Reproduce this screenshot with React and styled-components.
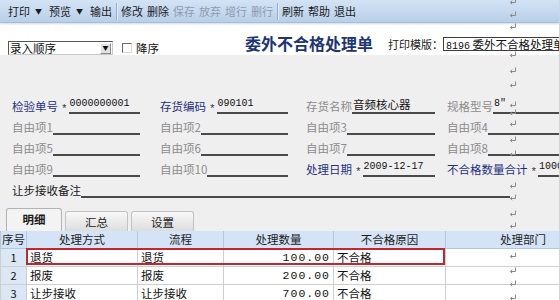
import React from 'react';
import styled, { createGlobalStyle } from 'styled-components';

const GlobalStyle = createGlobalStyle`
  html, body { margin: 0; padding: 0; background: #fff; }
  body {
    font-family: "Noto Sans CJK SC", "Liberation Sans", sans-serif;
    font-size: 12px;
    color: #111;
  }
`;

const Page = styled.div`
  width: 559px;
  height: 300px;
  overflow: hidden;
  position: relative;
  display: flex;
  flex-direction: column;
  background: #fff;
`;

/* ---------- toolbar ---------- */
const Toolbar = styled.div`
  flex: none;
  height: 22px;
  display: flex;
  align-items: center;
  gap: 4px;
  padding-left: 8px;
  background: linear-gradient(#d3e3f5, #b8cfe9);
  box-shadow: 0 1px 0 #a7bdd8, 0 2px 2px rgba(120, 140, 170, 0.35);
  position: relative;
  z-index: 1;
`;

const ToolButton = styled.span`
  flex: none;
  display: inline-flex;
  align-items: center;
  font-size: 11px;
  line-height: 14px;
  white-space: nowrap;
  color: ${(p) => (p.$disabled ? '#8e9bae' : '#1b1b1b')};
`;

const Caret = styled.span`
  font-size: 7px;
  margin: 0 3px 0 5px;
  color: #1b1b1b;
`;

const ToolSep = styled.span`
  flex: none;
  width: 1px;
  height: 17px;
  background: #94adca;
  box-shadow: 1px 0 0 #e4eef9;
`;

/* ---------- top white area ---------- */
const TopBar = styled.div`
  flex: none;
  height: 33px;
  display: flex;
  align-items: flex-start;
  padding-left: 8px;
  background: #fff;
  & > * { flex: none; }
`;

const Combo = styled.div`
  margin-top: 19px;
  width: 105px;
  height: 14px;
  box-sizing: border-box;
  display: flex;
  align-items: center;
  justify-content: space-between;
  border: 1px solid;
  border-color: #555 #c8c8c8 #c8c8c8 #555;
  background: #fff;
  font-size: 11.5px;
  line-height: 12px;
  padding-left: 1px;
`;

const ComboButton = styled.span`
  width: 11px;
  height: 11px;
  margin-right: 1px;
  box-sizing: border-box;
  display: flex;
  align-items: center;
  justify-content: center;
  background: #e2e2e2;
  border: 1px solid;
  border-color: #fff #8a8a8a #8a8a8a #fff;
  font-size: 6px;
  color: #111;
`;

const CheckBox = styled.span`
  margin: 21px 0 0 9px;
  width: 10px;
  height: 10px;
  box-sizing: border-box;
  border: 1px solid;
  border-color: #6a6a6a #dcdcdc #dcdcdc #6a6a6a;
  background: #fff;
`;

const CheckLabel = styled.span`
  margin: 19px 0 0 4px;
  font-size: 11.5px;
  line-height: 14px;
  white-space: nowrap;
`;

const Title = styled.h1`
  margin: 12px 0 0 86px;
  font-size: 16px;
  line-height: 18px;
  font-weight: bold;
  color: #1c3578;
  white-space: nowrap;
`;

const PrintGroup = styled.div`
  margin: 15px 0 0 15px;
  display: flex;
  align-items: center;
`;

const PrintLabel = styled.span`
  flex: none;
  font-size: 11px;
  line-height: 14px;
  white-space: nowrap;
  color: #222;
`;

const PrintInput = styled.div`
  flex: none;
  width: 140px;
  height: 14px;
  box-sizing: border-box;
  border: 1px solid #3c3c3c;
  background: #fff;
  font-size: 11.5px;
  line-height: 12px;
  white-space: nowrap;
  overflow: hidden;
  padding-left: 2px;
`;

const Mono = styled.span`
  font-family: "Liberation Mono", monospace;
  font-size: 10px;
`;

/* ---------- grey form area ---------- */
const Panel = styled.div`
  flex: 1;
  background: #efefef;
  display: flex;
  flex-direction: column;
  min-height: 0;
`;

const FieldGrid = styled.div`
  padding: 41px 0 0 12px;
  display: grid;
  grid-template-columns: 148px 146px 141px 140px;
  grid-auto-rows: 21px;
  & > *:nth-child(4n + 1) { padding-right: 20px; }
  & > *:nth-child(4n + 2) { padding-right: 18px; }
  & > *:nth-child(4n + 3) { padding-right: 12px; }
`;

const Field = styled.div`
  display: flex;
  align-items: flex-end;
  padding-bottom: 3px;
  min-width: 0;
  ${(p) => (p.$wide ? 'grid-column: 1 / -1; width: 498px;' : '')}
`;

const toneColor = { req: '#1f2f82', opt: '#8c8c8c', plain: '#1a1a1a' };

const Label = styled.span`
  flex: none;
  font-size: 11.5px;
  line-height: 14px;
  margin-bottom: 1px;
  white-space: nowrap;
  color: ${(p) => toneColor[p.$tone]};
`;

const Star = styled.span`
  flex: none;
  margin: 0 1px -2px 3px;
  font-family: "Liberation Mono", monospace;
  font-size: 11px;
  line-height: 14px;
  color: #333;
`;

const Line = styled.div`
  flex: 1;
  min-width: 0;
  height: 15px;
  border-bottom: 2px solid #4a4a4a;
  display: flex;
  align-items: flex-start;
  padding-left: 1px;
  font-size: 11.5px;
  line-height: 14px;
  white-space: nowrap;
  overflow: hidden;
  color: #111;
`;

/* ---------- tabs ---------- */
const TabBar = styled.div`
  margin-top: 7px;
  height: 23px;
  flex: none;
  display: flex;
  align-items: flex-end;
  gap: 3px;
  padding-left: 6px;
`;

const Tab = styled.div`
  box-sizing: border-box;
  height: ${(p) => (p.$active ? '23px' : '20px')};
  width: ${(p) => (p.$active ? '56px' : '63px')};
  border: 1px solid ${(p) => (p.$active ? '#b3b3b3' : '#c2c2c2')};
  border-bottom: none;
  border-radius: 3px 3px 0 0;
  background: ${(p) => (p.$active ? '#f3f3f3' : 'linear-gradient(#f8f8f8, #dddddd)')};
  font-size: 11.5px;
  line-height: 14px;
  padding-top: 3px;
  text-align: center;
  font-weight: ${(p) => (p.$active ? 'bold' : 'normal')};
  color: #1a1a1a;
`;

/* ---------- grid table ---------- */
const TableWrap = styled.div`
  position: relative;
  flex: none;
`;

const Table = styled.table`
  border-collapse: collapse;
  table-layout: fixed;
  width: 600px;
  font-size: 11.5px;
`;

const Th = styled.th`
  height: 17px;
  padding: 0;
  background: #d4e3f5;
  border: 1px solid #b2c7e1;
  border-top: none;
  font-weight: normal;
  line-height: 15px;
  color: #1d1d1d;
  white-space: nowrap;
  overflow: hidden;
  text-align: center;
`;

const Td = styled.td`
  height: 17px;
  padding: 0 3px;
  border: 1px solid #cfcfcf;
  background: ${(p) => (p.$index ? '#dce7f5' : '#fff')};
  line-height: 15px;
  white-space: nowrap;
  overflow: hidden;
  text-align: ${(p) => p.$align || 'left'};
  font-family: ${(p) => (p.$num ? '"Liberation Mono", monospace' : 'inherit')};
  letter-spacing: ${(p) => (p.$num ? '1px' : 'normal')};
  font-size: ${(p) => (p.$index ? '11px' : '11.5px')};
`;

const Highlight = styled.div`
  position: absolute;
  left: 26px;
  top: 17px;
  width: 419px;
  height: 17px;
  border: 2px solid #c5262e;
  box-sizing: border-box;
  pointer-events: none;
`;

/* ---------- paragraph marks overlay ---------- */
const Marks = styled.div`
  position: absolute;
  left: 509px;
  top: 0;
  width: 10px;
  height: 300px;
  pointer-events: none;
  z-index: 2;
`;

const Mark = styled.svg`
  position: absolute;
  left: 0;
  width: 8px;
  height: 7px;
`;

const ReturnMark = ({ y }) => (
  <Mark viewBox="0 0 8 7" style={{ top: y - 3 }}>
    <path d="M6.5 0.5 V4.5 H1.5 M3.2 2.8 L1.3 4.5 L3.2 6.2" fill="none" stroke="#8a8a8a" strokeWidth="1" />
  </Mark>
);

const markYs = [1, 14, 26, 54, 70, 84, 104, 112, 123, 139, 153, 185, 197, 213, 225, 255, 270, 283, 297];

const fieldRows = [
  [
    { label: '检验单号', tone: 'req', star: true, value: <Mono>0000000001</Mono> },
    { label: '存货编码', tone: 'req', star: true, value: <Mono>090101</Mono> },
    { label: '存货名称', tone: 'opt', value: '音频核心器' },
    { label: '规格型号', tone: 'opt', value: <Mono>8"</Mono> },
  ],
  [
    { label: '自由项1', tone: 'opt' },
    { label: '自由项2', tone: 'opt' },
    { label: '自由项3', tone: 'opt' },
    { label: '自由项4', tone: 'opt' },
  ],
  [
    { label: '自由项5', tone: 'opt' },
    { label: '自由项6', tone: 'opt' },
    { label: '自由项7', tone: 'opt' },
    { label: '自由项8', tone: 'opt' },
  ],
  [
    { label: '自由项9', tone: 'opt' },
    { label: '自由项10', tone: 'opt' },
    { label: '处理日期', tone: 'req', star: true, value: <Mono>2009-12-17</Mono> },
    { label: '不合格数量合计', tone: 'req', star: true, value: <Mono>1000.</Mono> },
  ],
];

const rows = [
  { n: 1, way: '退货', flow: '退货', qty: '100.00', reason: '不合格' },
  { n: 2, way: '报废', flow: '报废', qty: '200.00', reason: '不合格' },
  { n: 3, way: '让步接收', flow: '让步接收', qty: '700.00', reason: '不合格' },
];

export default function App() {
  return (
    <Page>
      <GlobalStyle />
      <Toolbar>
        <ToolButton>打印<Caret>▼</Caret></ToolButton>
        <ToolButton>预览<Caret>▼</Caret></ToolButton>
        <ToolButton>输出</ToolButton>
        <ToolSep />
        <ToolButton>修改</ToolButton>
        <ToolButton>删除</ToolButton>
        <ToolButton $disabled>保存</ToolButton>
        <ToolButton $disabled>放弃</ToolButton>
        <ToolButton $disabled>增行</ToolButton>
        <ToolButton $disabled>删行</ToolButton>
        <ToolSep />
        <ToolButton>刷新</ToolButton>
        <ToolButton>帮助</ToolButton>
        <ToolButton>退出</ToolButton>
      </Toolbar>

      <TopBar>
        <Combo>
          录入顺序
          <ComboButton>▼</ComboButton>
        </Combo>
        <CheckBox />
        <CheckLabel>降序</CheckLabel>
        <Title>委外不合格处理单</Title>
        <PrintGroup>
          <PrintLabel>打印模版：</PrintLabel>
          <PrintInput><Mono>8196</Mono> 委外不合格处理单默认模版</PrintInput>
        </PrintGroup>
      </TopBar>

      <Panel>
        <FieldGrid>
          {fieldRows.flat().map((f, i) => (
            <Field key={i}>
              <Label $tone={f.tone}>{f.label}</Label>
              {f.star && <Star>*</Star>}
              <Line>{f.value}</Line>
            </Field>
          ))}
          <Field $wide>
            <Label $tone="plain">让步接收备注</Label>
            <Line />
          </Field>
        </FieldGrid>

        <TabBar>
          <Tab $active>明细</Tab>
          <Tab>汇总</Tab>
          <Tab>设置</Tab>
        </TabBar>

        <TableWrap>
          <Table>
            <colgroup>
              <col style={{ width: 26 }} />
              <col style={{ width: 111 }} />
              <col style={{ width: 86 }} />
              <col style={{ width: 110 }} />
              <col style={{ width: 112 }} />
              <col style={{ width: 155 }} />
            </colgroup>
            <thead>
              <tr>
                <Th>序号</Th>
                <Th>处理方式</Th>
                <Th>流程</Th>
                <Th>处理数量</Th>
                <Th>不合格原因</Th>
                <Th>处理部门</Th>
              </tr>
            </thead>
            <tbody>
              {rows.map((r) => (
                <tr key={r.n}>
                  <Td $index $align="center">{r.n}</Td>
                  <Td>{r.way}</Td>
                  <Td>{r.flow}</Td>
                  <Td $num $align="right">{r.qty}</Td>
                  <Td>{r.reason}</Td>
                  <Td />
                </tr>
              ))}
            </tbody>
          </Table>
          <Highlight />
        </TableWrap>
      </Panel>

      <Marks>
        {markYs.map((y) => (
          <ReturnMark key={y} y={y} />
        ))}
      </Marks>
    </Page>
  );
}
